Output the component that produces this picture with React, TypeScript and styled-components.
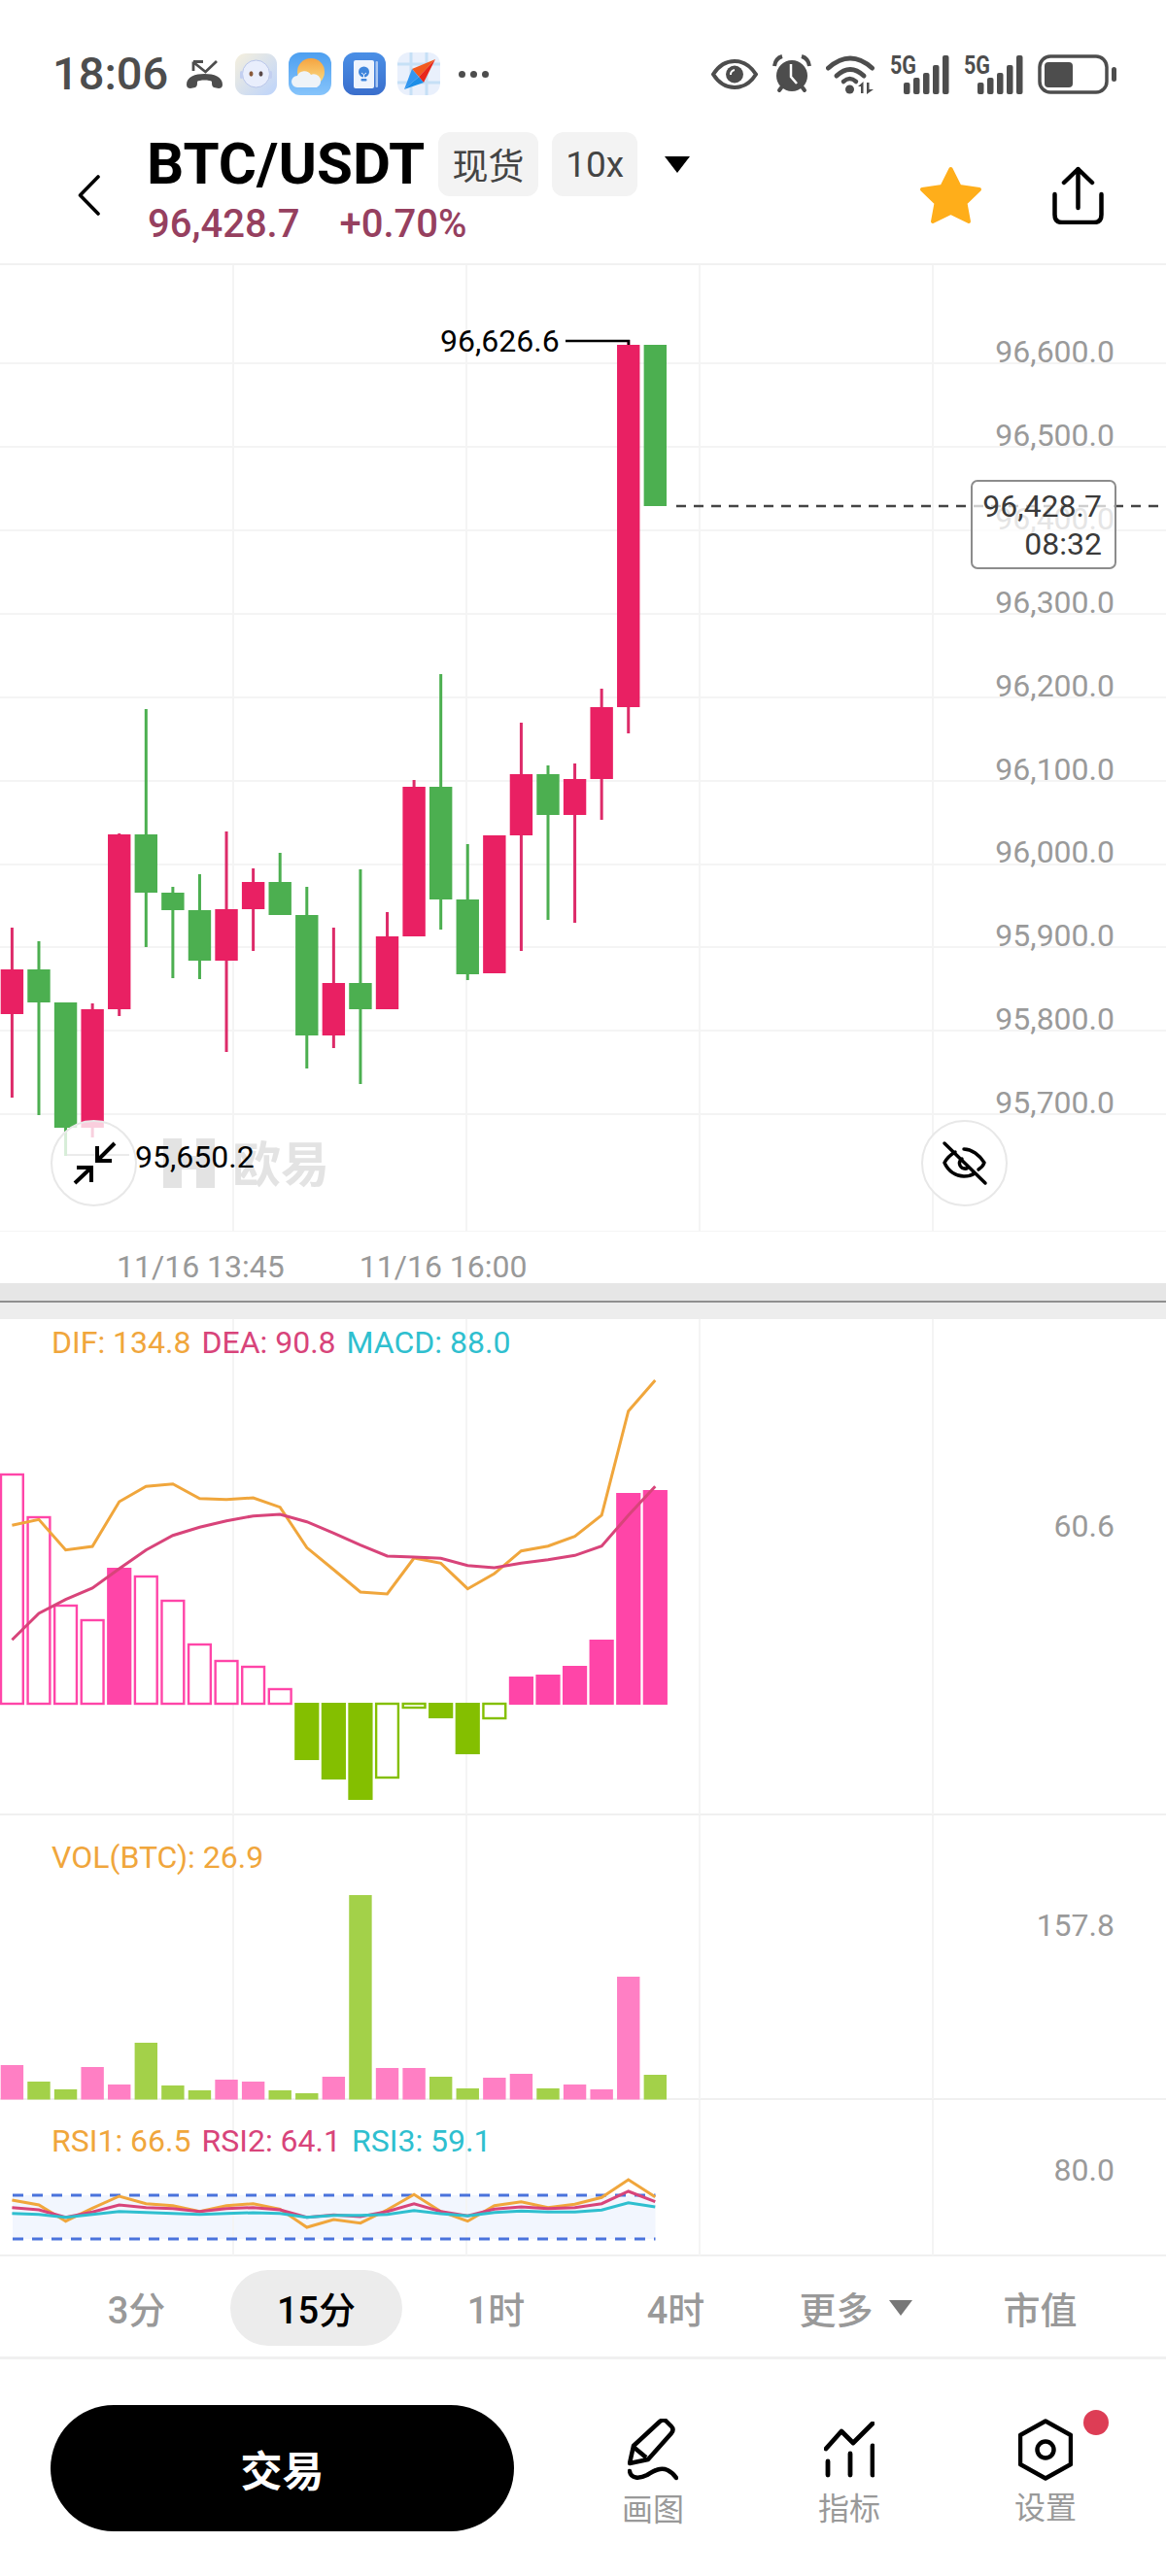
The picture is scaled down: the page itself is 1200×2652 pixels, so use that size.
import React from "react";
import styled, { createGlobalStyle } from "styled-components";

const FONT = `Roboto, "Noto Sans CJK SC", sans-serif`;

const GlobalStyle = createGlobalStyle`
  html, body { margin: 0; padding: 0; background: #fff; }
  body { font-family: ${FONT}; }
`;

const Page = styled.div`
  width: 1200px;
  height: 2652px;
  overflow: hidden;
  background: #fff;
  display: flex;
  flex-direction: column;
`;

/* ---------- status bar ---------- */
const StatusBar = styled.div`
  height: 130px;
  box-sizing: border-box;
  padding: 22px 51px 0 54px;
  display: flex;
  align-items: center;
  color: #4d4d4d;
`;
const Clock = styled.span`
  font-size: 47px;
  font-weight: 500;
  line-height: 50px;
  margin-right: 18px;
`;
const StatusLeft = styled.div`
  display: flex;
  align-items: center;
  gap: 12px;
`;
const StatusRight = styled.div`
  margin-left: auto;
  display: flex;
  align-items: center;
  gap: 15px;
`;
const Dots = styled.div`
  display: flex;
  gap: 5px;
  margin-left: 7px;
`;
const Dot = styled.span`
  width: 7px;
  height: 7px;
  border-radius: 50%;
  background: #4d4d4d;
`;

/* ---------- header ---------- */
const Header = styled.header`
  height: 143px;
  box-sizing: border-box;
  border-bottom: 2px solid #f1f1f1;
  padding: 0 64px 0 80px;
  display: flex;
  align-items: center;
`;
const TitleColumn = styled.div`
  margin-left: 48px;
  align-self: flex-start;
  padding-top: 6px;
`;
const TitleRow = styled.div`
  display: flex;
  align-items: center;
  height: 66px;
`;
const Title = styled.h1`
  margin: 0 14px 0 0;
  font-size: 60px;
  font-weight: 700;
  color: #000;
  line-height: 66px;
  white-space: nowrap;
`;
const Tag = styled.span<{ $w: number }>`
  width: ${(p) => p.$w}px;
  height: 66px;
  margin-right: 14px;
  border-radius: 12px;
  background: #f3f3f3;
  color: #444;
  font-size: 37px;
  display: flex;
  align-items: center;
  justify-content: center;
`;
const DropTriangle = styled.span<{ $w: number; $h: number; $c: string }>`
  display: block;
  width: 0;
  height: 0;
  border-left: ${(p) => p.$w / 2}px solid transparent;
  border-right: ${(p) => p.$w / 2}px solid transparent;
  border-top: ${(p) => p.$h}px solid ${(p) => p.$c};
`;
const HeaderDrop = styled.div`
  margin-left: 14px;
`;
const PriceRow = styled.div`
  display: flex;
  gap: 41px;
  margin-top: 7px;
  margin-left: 1px;
  font-size: 40px;
  line-height: 44px;
  font-weight: 500;
  color: #96405f;
`;
const HeaderActions = styled.div`
  margin-left: auto;
  display: flex;
  align-items: center;
  gap: 72px;
`;

/* ---------- charts ---------- */
const Panel = styled.section<{ $h: number; $line?: boolean }>`
  position: relative;
  height: ${(p) => p.$h}px;
  flex: none;
  box-shadow: ${(p) => (p.$line ? "inset 0 -2px 0 #f0f0f0" : "none")};
`;
const ChartSvg = styled.svg`
  display: block;
  width: 1200px;
  height: 100%;
`;
const ChartText = styled.text<{ $fill: string; $size: number; $weight?: number }>`
  font-family: ${FONT};
  font-size: ${(p) => p.$size}px;
  font-weight: ${(p) => p.$weight ?? 400};
  fill: ${(p) => p.$fill};
`;
const Legend = styled.div<{ $top: number }>`
  position: absolute;
  left: 53px;
  top: ${(p) => p.$top}px;
  display: flex;
  gap: 11px;
  font-size: 32px;
  line-height: 36px;
`;
const LegendItem = styled.span<{ $c: string }>`
  color: ${(p) => p.$c};
`;
const FloatButton = styled.button<{ $left: number }>`
  position: absolute;
  left: ${(p) => p.$left}px;
  top: 880px;
  width: 89px;
  height: 89px;
  box-sizing: border-box;
  padding: 0;
  border-radius: 50%;
  border: 2px solid #e8e8e8;
  background: rgba(255, 255, 255, 0.78);
  display: flex;
  align-items: center;
  justify-content: center;
`;
const PriceTag = styled.div`
  position: absolute;
  left: 999px;
  top: 221px;
  width: 150px;
  height: 92px;
  box-sizing: border-box;
  padding: 6px 13px 0 0;
  border: 2px solid #8c8c8c;
  border-radius: 7px;
  background: rgba(255, 255, 255, 0.74);
  text-align: right;
  color: #3a3a3a;
  font-size: 32px;
  line-height: 39px;
`;
const TimeAxis = styled.div`
  height: 53px;
  box-sizing: border-box;
  padding: 18px 0 0 120px;
  display: flex;
  gap: 77px;
  font-size: 32px;
  line-height: 37px;
  color: #999;
`;
const Divider = styled.div`
  height: 37px;
  flex: none;
  background: linear-gradient(#e6e6e6 18px, #8f8f8f 18px, #8f8f8f 20px, #ededed 20px);
`;

/* ---------- tabs ---------- */
const Tabs = styled.nav`
  height: 106px;
  flex: none;
  box-sizing: border-box;
  padding: 2px 0 0 48px;
  border-bottom: 3px solid #f0f0f0;
  display: grid;
  grid-template-columns: repeat(5, 185px) 195px;
  align-items: center;
`;
const Tab = styled.div<{ $active?: boolean }>`
  height: 78px;
  margin: 0 4px;
  border-radius: 39px;
  display: flex;
  align-items: center;
  justify-content: center;
  gap: 16px;
  font-size: 38px;
  font-weight: 500;
  color: ${(p) => (p.$active ? "#000" : "#999")};
  background: ${(p) => (p.$active ? "#ececec" : "transparent")};
`;

/* ---------- bottom nav ---------- */
const BottomNav = styled.footer`
  flex: 1;
  box-sizing: border-box;
  padding: 47px 0 0 52px;
  display: flex;
  align-items: flex-start;
`;
const TradeButton = styled.button`
  width: 477px;
  height: 130px;
  margin-right: 42px;
  border: none;
  border-radius: 65px;
  background: #000;
  color: #fff;
  font-family: ${FONT};
  font-size: 43px;
  font-weight: 700;
`;
const NavItem = styled.div`
  position: relative;
  width: 202px;
  padding-top: 12px;
  display: flex;
  flex-direction: column;
  align-items: center;
`;
const NavIconBox = styled.div`
  height: 68px;
  display: flex;
  align-items: center;
  justify-content: center;
`;
const NavLabel = styled.span<{ $drop?: number }>`
  font-size: 32px;
  line-height: 40px;
  color: #999;
  margin-top: ${(p) => p.$drop ?? 7}px;
`;
const RedDot = styled.span`
  position: absolute;
  left: 140px;
  top: 5px;
  width: 26px;
  height: 26px;
  border-radius: 50%;
  background: #dd3d55;
`;

/* ---------- data ---------- */
type Candle = [string, number, number, number, number];
const P = "#e92063";
const G = "#4caf50";
const candles: Candle[] = [
  [P, 955, 998, 1044, 1130],
  [G, 969, 998, 1032, 1148],
  [G, 1032, 1032, 1161, 1190],
  [P, 1033, 1039, 1161, 1171],
  [P, 858, 859, 1039, 1046],
  [G, 730, 859, 919, 975],
  [G, 913, 919, 937, 1007],
  [G, 900, 937, 989, 1008],
  [P, 856, 936, 989, 1083],
  [P, 894, 908, 936, 979],
  [G, 878, 908, 942, 942],
  [G, 913, 942, 1066, 1100],
  [P, 955, 1012, 1066, 1079],
  [G, 895, 1012, 1039, 1116],
  [P, 939, 964, 1039, 1039],
  [P, 803, 810, 964, 964],
  [G, 694, 810, 926, 957],
  [G, 869, 926, 1003, 1009],
  [P, 860, 860, 1002, 1002],
  [P, 744, 797, 860, 979],
  [G, 788, 797, 839, 947],
  [P, 786, 802, 839, 950],
  [P, 709, 728, 802, 844],
  [P, 350, 355, 728, 755],
  [G, 355, 355, 521, 521],
];
const cx = (i: number) => 12.4 + 27.58 * i;
const toPoints = (vals: number[], base: number) =>
  vals.map((z, i) => `${cx(i).toFixed(1)},${(base + z / 3).toFixed(1)}`).join(" ");

const hGrid = [374, 460, 546, 632, 718, 804, 890, 975, 1061, 1147, 1268];
const vGrid = [240, 480, 720, 960];
const axisLabels = ["96,600.0", "96,500.0", "96,400.0", "96,300.0", "96,200.0", "96,100.0", "96,000.0", "95,900.0", "95,800.0", "95,700.0"];

type Hist = [boolean, boolean, number];
const HP = "#ff45a8";
const HG = "#84bf00";
const macdBars: Hist[] = [
  [true, true, 1517], [true, true, 1561], [true, true, 1652], [true, true, 1667],
  [true, false, 1614], [true, true, 1622], [true, true, 1647], [true, true, 1692],
  [true, true, 1709], [true, true, 1715], [true, true, 1738],
  [false, false, 1812], [false, false, 1832], [false, false, 1853], [false, true, 1831],
  [false, true, 1759], [false, false, 1769], [false, false, 1806], [false, true, 1770],
  [true, false, 1726], [true, false, 1724], [true, false, 1715], [true, false, 1688],
  [true, false, 1537], [true, false, 1534],
];
const dif = [691, 673, 767, 756, 618, 571, 563, 608, 611, 606, 635, 760, 828, 897, 903, 792, 808, 887, 840, 770, 755, 725, 660, 338, 243];
const dea = [1045, 963, 920, 885, 825, 767, 722, 697, 677, 662, 657, 680, 715, 752, 786, 789, 793, 815, 822, 808, 797, 784, 755, 660, 571];

const volTops = [798, 849, 873, 804, 858, 729, 861, 876, 843, 849, 876, 885, 834, 273, 807, 807, 834, 870, 837, 825, 870, 858, 873, 525, 828];
const volPink = [1, 0, 0, 1, 1, 0, 0, 0, 1, 1, 0, 0, 1, 0, 1, 1, 0, 0, 1, 1, 0, 1, 1, 1, 0];

const rsi1 = [1215, 1230, 1280, 1240, 1203, 1226, 1232, 1250, 1232, 1226, 1243, 1299, 1275, 1286, 1245, 1198, 1250, 1280, 1232, 1220, 1238, 1228, 1207, 1152, 1205];
const rsi2 = [1238, 1245, 1268, 1252, 1230, 1238, 1241, 1250, 1241, 1238, 1245, 1268, 1261, 1266, 1250, 1226, 1250, 1264, 1243, 1236, 1241, 1238, 1226, 1188, 1220];
const rsi3 = [1256, 1259, 1268, 1259, 1250, 1253, 1256, 1259, 1256, 1254, 1256, 1268, 1262, 1262, 1259, 1247, 1257, 1264, 1253, 1249, 1252, 1252, 1246, 1223, 1236];

const ORANGE = "#f0a63c";
const ROSE = "#d8447a";
const CYAN = "#2fbfcf";
const GRID = "#f4f4f4";

const VLines = ({ y1, y2 }: { y1: number; y2: number }) => (
  <>
    {vGrid.map((x) => (
      <line key={x} x1={x} x2={x} y1={y1} y2={y2} stroke={GRID} strokeWidth={2} />
    ))}
  </>
);

/* ---------- icons ---------- */
const MissedCall = () => (
  <svg width="39" height="31" viewBox="0 0 39 31">
    <path d="M32 2 L20.500 13 L8 3 M8 2.500 H18 M8 2.500 V12" fill="none" stroke="#4d4d4d" strokeWidth="2.800" />
    <path d="M1 26 C1 18 10 15 19.500 15 C29 15 38 18 38 26 C38 29 36 30 34 30 L29 29 C27 28 27 26 27 23 C25 21 14 21 12 23 C12 26 12 28 10 29 L5 30 C3 30 1 29 1 26Z" fill="#4d4d4d" />
  </svg>
);
const RobotApp = () => (
  <svg width="43" height="43" viewBox="0 0 43 43">
    <defs>
      <linearGradient id="rb" x1="0" y1="0" x2="1" y2="1">
        <stop offset="0" stopColor="#f6f0dd" />
        <stop offset="1" stopColor="#bcd3fb" />
      </linearGradient>
    </defs>
    <rect width="43" height="43" rx="11" fill="url(#rb)" />
    <circle cx="21.500" cy="21" r="14" fill="#e9eefc" stroke="#b9c6ea" strokeWidth="1" />
    <rect x="5" y="18" width="3" height="8" rx="1.500" fill="#c3cff0" />
    <rect x="35" y="18" width="3" height="8" rx="1.500" fill="#c3cff0" />
    <ellipse cx="16.500" cy="21" rx="2" ry="2.700" fill="#8a5a3a" />
    <ellipse cx="26.500" cy="21" rx="2" ry="2.700" fill="#5a4a4a" />
  </svg>
);
const WeatherApp = () => (
  <svg width="44" height="44" viewBox="0 0 44 44">
    <defs>
      <linearGradient id="wb" x1="0" y1="0" x2="0" y2="1">
        <stop offset="0" stopColor="#4d9ff0" />
        <stop offset="1" stopColor="#86c4fb" />
      </linearGradient>
      <linearGradient id="ws" x1="0" y1="0" x2="0" y2="1">
        <stop offset="0" stopColor="#f5a340" />
        <stop offset="1" stopColor="#fbe28a" />
      </linearGradient>
    </defs>
    <rect width="44" height="44" rx="12" fill="url(#wb)" />
    <circle cx="23" cy="20" r="14" fill="url(#ws)" />
    <path d="M9 36 a6 6 0 0 1 0 -12 a8 8 0 0 1 14 -1 a7 7 0 0 1 6 13 Z" fill="#eef3f8" />
  </svg>
);
const NoteApp = () => (
  <svg width="44" height="44" viewBox="0 0 44 44">
    <defs>
      <linearGradient id="nb" x1="0" y1="0" x2="0" y2="1">
        <stop offset="0" stopColor="#4a8fe6" />
        <stop offset="1" stopColor="#3a6ecc" />
      </linearGradient>
    </defs>
    <rect width="44" height="44" rx="12" fill="url(#nb)" />
    <rect x="11" y="8" width="21" height="29" rx="2" fill="#eef4fd" />
    <rect x="33.500" y="9" width="2.500" height="27" rx="1" fill="#a9c7f2" />
    <circle cx="21.500" cy="20" r="5.500" fill="#3f86dc" />
    <path d="M19 21 l2.500 2 l2.500 -2 M21.500 23 v3" fill="none" stroke="#eef4fd" strokeWidth="1" />
    <rect x="18.500" y="27" width="6" height="2.500" rx="1" fill="#3f86dc" />
  </svg>
);
const CompassApp = () => (
  <svg width="44" height="44" viewBox="0 0 44 44">
    <rect width="44" height="44" rx="12" fill="#e9f0fc" />
    <path d="M14 0 V44 M30 0 V44 M0 12 H44 M0 31 H44" stroke="#c6e0f6" strokeWidth="3" />
    <path d="M39 7 L22 25 L15 17 Z" fill="#f25a1e" />
    <path d="M39 7 L27 31 L22 25 Z" fill="#e8271b" />
    <path d="M15 17 L22 25 L7 38 Z" fill="#3296f0" />
    <path d="M27 31 L22 25 L7 38 Z" fill="#1c8ee8" />
  </svg>
);
const EyeStatus = () => (
  <svg width="48" height="31" viewBox="0 0 48 31">
    <path d="M2 15.500 C8 6 15 2 24 2 C33 2 40 6 46 15.500 C40 25 33 29 24 29 C15 29 8 25 2 15.500Z" fill="none" stroke="#4d4d4d" strokeWidth="4" />
    <circle cx="24" cy="15.500" r="9" fill="#4d4d4d" />
    <path d="M20 16 a4.500 4.500 0 0 1 4 -5" fill="none" stroke="#fff" strokeWidth="2" />
  </svg>
);
const AlarmStatus = () => (
  <svg width="40" height="40" viewBox="0 0 40 40">
    <circle cx="20" cy="22" r="16" fill="#4d4d4d" />
    <path d="M2 12 Q3 4 10 2 M38 12 Q37 4 30 2" fill="none" stroke="#4d4d4d" strokeWidth="4" />
    <path d="M7 37 L10 33 M33 37 L30 33" stroke="#4d4d4d" strokeWidth="4" strokeLinecap="round" />
    <path d="M19 10 V23 L25 30" fill="none" stroke="#fff" strokeWidth="2.500" />
  </svg>
);
const WifiStatus = () => (
  <svg width="51" height="41" viewBox="0 0 51 41">
    <path d="M2.500 14 Q25 -6 47.500 14" fill="none" stroke="#4d4d4d" strokeWidth="5" strokeLinecap="round" />
    <path d="M11 22 Q25 9 39 22" fill="none" stroke="#4d4d4d" strokeWidth="5" strokeLinecap="round" />
    <path d="M18 28 Q24.500 22 31 28" fill="none" stroke="#4d4d4d" strokeWidth="4.500" strokeLinecap="round" />
    <circle cx="24.500" cy="36" r="4.500" fill="#4d4d4d" />
    <path d="M38.500 28 V40 H36 V33 H33 Z M42 41 V29 H44.500 V36 H49 Z" fill="#4d4d4d" />
  </svg>
);
const SignalStatus = () => (
  <svg width="61" height="51" viewBox="0 -5 61 51">
    <ChartText x="0" y="20" $fill="#4d4d4d" $size={26} $weight={700} textLength={27} lengthAdjust="spacingAndGlyphs">5G</ChartText>
    {[29, 24, 19, 11, 1].map((t, i) => (
      <rect key={i} x={14 + i * 10} y={t} width="6.500" height={41 - t} rx="2" fill="#4d4d4d" />
    ))}
  </svg>
);
const BatteryStatus = () => (
  <svg width="81" height="41" viewBox="0 0 81 41">
    <rect x="2" y="2" width="69" height="37" rx="11" fill="none" stroke="#4d4d4d" strokeWidth="3.500" />
    <rect x="7" y="8" width="29" height="26" rx="4" fill="#4d4d4d" />
    <rect x="76" y="13" width="5" height="15" rx="2.500" fill="#4d4d4d" />
  </svg>
);
const BackIcon = () => (
  <svg width="23" height="42" viewBox="0 0 23 42">
    <path d="M21 2 L2.500 21 L21 40" fill="none" stroke="#000" strokeWidth="3.600" strokeLinecap="round" strokeLinejoin="round" />
  </svg>
);
const StarIcon = () => (
  <svg width="65" height="60" viewBox="0 0 65 60">
    <polygon points="32.500,3 41.500,21 62,24 47.500,38 51,57 32.500,48 14,57 17.500,38 3,24 23.500,21" fill="#ffae1a" stroke="#ffae1a" strokeWidth="4" strokeLinejoin="round" />
  </svg>
);
const ShareIcon = () => (
  <svg width="53" height="60" viewBox="0 0 53 60">
    <path d="M26.500 3 V43 M12 17 L26.500 3 L41 17 M2.500 29 V50 Q2.500 58 10 58 H43 Q50.500 58 50.500 50 V29" fill="none" stroke="#000" strokeWidth="4.500" strokeLinecap="round" strokeLinejoin="round" />
  </svg>
);
const CollapseIcon = () => (
  <svg width="50" height="50" viewBox="0 0 50 50">
    <path d="M46 4 L28 22 M28 7 V22 H43 M5 45 L22 29 M7 29 H22 V44" fill="none" stroke="#000" strokeWidth="4" />
  </svg>
);
const EyeOffIcon = () => (
  <svg width="50" height="50" viewBox="0 0 50 50">
    <path d="M4 4 L46 45 M24 10 C32 10 40 16 45 24 C44 27 42 29 39 31 M15 13 C10 16 6 20 4 24 C8 33 16 38 24 38 C28 38 32 37 35 35 M22 20 C17 24 20 31 27 30" fill="none" stroke="#000" strokeWidth="3.500" strokeLinecap="round" strokeLinejoin="round" />
  </svg>
);
const PenIcon = () => (
  <svg width="52" height="64" viewBox="0 0 52 64">
    <path d="M2 46 L6 28 L33 3 Q37 0 40 3 L45 8 Q48 11 45 15 L21 42 Z M7 30 L19 40" fill="none" stroke="#000" strokeWidth="4.500" strokeLinejoin="round" />
    <path d="M2 54 C3 62 12 62 20 58 C28 53 34 50 41 53 C45 55 48 58 50 61" fill="none" stroke="#000" strokeWidth="4.500" strokeLinecap="round" />
  </svg>
);
const IndicatorIcon = () => (
  <svg width="52" height="58" viewBox="0 0 52 58">
    <path d="M2 28 L18 10 L30 22 L50 2 M4 41 V55 M27 33 V55 M50 25 V55" fill="none" stroke="#000" strokeWidth="4.800" strokeLinecap="round" strokeLinejoin="round" />
  </svg>
);
const SettingsIcon = () => (
  <svg width="56" height="64" viewBox="0 0 56 64">
    <path d="M28 2.500 L54 17 V47 L28 61.500 L2 47 V17 Z" fill="none" stroke="#000" strokeWidth="4.500" strokeLinejoin="round" />
    <circle cx="28" cy="32" r="8.500" fill="none" stroke="#000" strokeWidth="4.500" />
  </svg>
);

export default function App() {
  return (
    <Page>
      <GlobalStyle />
      <StatusBar>
        <Clock>18:06</Clock>
        <StatusLeft>
          <MissedCall />
          <RobotApp />
          <WeatherApp />
          <NoteApp />
          <CompassApp />
          <Dots>
            <Dot />
            <Dot />
            <Dot />
          </Dots>
        </StatusLeft>
        <StatusRight>
          <EyeStatus />
          <AlarmStatus />
          <WifiStatus />
          <SignalStatus />
          <SignalStatus />
          <BatteryStatus />
        </StatusRight>
      </StatusBar>

      <Header>
        <BackIcon />
        <TitleColumn>
          <TitleRow>
            <Title>BTC/USDT</Title>
            <Tag $w={103}>现货</Tag>
            <Tag $w={88}>10x</Tag>
            <HeaderDrop>
              <DropTriangle $w={26} $h={17} $c="#000" />
            </HeaderDrop>
          </TitleRow>
          <PriceRow>
            <span>96,428.7</span>
            <span>+0.70%</span>
          </PriceRow>
        </TitleColumn>
        <HeaderActions>
          <StarIcon />
          <ShareIcon />
        </HeaderActions>
      </Header>

      <Panel $h={995}>
        <ChartSvg viewBox="0 273 1200 995">
          <VLines y1={273} y2={1268} />
          {hGrid.map((y) => (
            <line key={y} x1={0} x2={1200} y1={y} y2={y} stroke={GRID} strokeWidth={2} />
          ))}
          {axisLabels.map((t, i) => (
            <ChartText key={t} x={1147} y={373 + i * 85.9} textAnchor="end" $fill="#9a9a9a" $size={32}>
              {t}
            </ChartText>
          ))}
          <g fill="#e3e3e3">
            <rect x="168" y="1172" width="19" height="51" />
            <rect x="202" y="1172" width="19" height="51" />
            <rect x="187" y="1190" width="15" height="14" />
          </g>
          <ChartText x={239} y={1217} $fill="#e3e3e3" $size={50} $weight={700}>
            欧易
          </ChartText>
          <path d="M68 1161 V1189 H133" fill="none" stroke="#a5a5a5" strokeWidth={2} />
          {candles.map(([c, wt, bt, bb, wb], i) => (
            <g key={i}>
              <rect x={cx(i) - 1.5} y={wt} width={3} height={wb - wt} fill={c === P ? "#dd2b69" : c} />
              <rect x={cx(i) - 11.7} y={bt} width={23.4} height={bb - bt} fill={c} />
            </g>
          ))}
          <path d="M582 351 H647 V355" fill="none" stroke="#000" strokeWidth={2.500} />
          <ChartText x={453} y={362} $fill="#000" $size={32}>96,626.6</ChartText>
          <ChartText x={139} y={1202} $fill="#000" $size={32}>95,650.2</ChartText>
          <line x1={696} x2={1206} y1={521} y2={521} stroke="#444" strokeWidth={2.500} strokeDasharray="10 8" />
        </ChartSvg>
        <PriceTag>
          96,428.7
          <br />
          08:32
        </PriceTag>
        <FloatButton $left={52}>
          <CollapseIcon />
        </FloatButton>
        <FloatButton $left={948}>
          <EyeOffIcon />
        </FloatButton>
      </Panel>

      <TimeAxis>
        <span>11/16 13:45</span>
        <span>11/16 16:00</span>
      </TimeAxis>
      <Divider />

      <Panel $h={511} $line>
        <ChartSvg viewBox="0 1358 1200 511">
          <VLines y1={1358} y2={1868} />
          {macdBars.map(([up, hollow, end], i) => {
            const top = up ? end : 1753;
            const bottom = up ? 1755 : end;
            const color = up ? HP : HG;
            return hollow ? (
              <rect key={i} x={cx(i) - 11.4} y={top + 1} width={22.8} height={bottom - top - 2} fill="#fff" stroke={color} strokeWidth={2.400} />
            ) : (
              <rect key={i} x={cx(i) - 12.6} y={top} width={25.2} height={bottom - top} fill={color} />
            );
          })}
          <polyline points={toPoints(dif, 1340)} fill="none" stroke={ORANGE} strokeWidth={3} />
          <polyline points={toPoints(dea, 1340)} fill="none" stroke={ROSE} strokeWidth={3} />
          <ChartText x={1147} y={1582} textAnchor="end" $fill="#9a9a9a" $size={32}>60.6</ChartText>
        </ChartSvg>
        <Legend $top={6}>
          <LegendItem $c={ORANGE}>DIF: 134.8</LegendItem>
          <LegendItem $c={ROSE}>DEA: 90.8</LegendItem>
          <LegendItem $c={CYAN}>MACD: 88.0</LegendItem>
        </Legend>
      </Panel>

      <Panel $h={293} $line>
        <ChartSvg viewBox="0 1869 1200 293">
          <VLines y1={1869} y2={2161} />
          {volTops.map((z, i) => (
            <rect key={i} x={cx(i) - 11.7} y={1860 + z / 3} width={23.4} height={2161.500 - (1860 + z / 3)} fill={volPink[i] ? "#ff7fc4" : "#a3d149"} />
          ))}
          <ChartText x={1147} y={1993} textAnchor="end" $fill="#9a9a9a" $size={32}>157.8</ChartText>
        </ChartSvg>
        <Legend $top={25}>
          <LegendItem $c={ORANGE}>VOL(BTC): 26.9</LegendItem>
        </Legend>
      </Panel>

      <Panel $h={161} $line>
        <ChartSvg viewBox="0 2162 1200 161">
          <rect x={13} y={2260} width={661.500} height={45} fill="#f2f6fe" />
          <VLines y1={2162} y2={2322} />
          <line x1={13} x2={674.500} y1={2260} y2={2260} stroke="#4a73dc" strokeWidth={3} strokeDasharray="11 9" />
          <line x1={13} x2={674.500} y1={2305} y2={2305} stroke="#4a73dc" strokeWidth={3} strokeDasharray="11 9" />
          <polyline points={toPoints(rsi1, 1860)} fill="none" stroke={ORANGE} strokeWidth={3} />
          <polyline points={toPoints(rsi2, 1860)} fill="none" stroke={ROSE} strokeWidth={3} />
          <polyline points={toPoints(rsi3, 1860)} fill="none" stroke={CYAN} strokeWidth={3} />
          <ChartText x={1147} y={2245} textAnchor="end" $fill="#9a9a9a" $size={32}>80.0</ChartText>
        </ChartSvg>
        <Legend $top={24}>
          <LegendItem $c={ORANGE}>RSI1: 66.5</LegendItem>
          <LegendItem $c={ROSE}>RSI2: 64.1</LegendItem>
          <LegendItem $c={CYAN}>RSI3: 59.1</LegendItem>
        </Legend>
      </Panel>

      <Tabs>
        <Tab>3分</Tab>
        <Tab $active>15分</Tab>
        <Tab>1时</Tab>
        <Tab>4时</Tab>
        <Tab>
          更多
          <DropTriangle $w={24} $h={16} $c="#777" />
        </Tab>
        <Tab>市值</Tab>
      </Tabs>

      <BottomNav>
        <TradeButton>交易</TradeButton>
        <NavItem>
          <NavIconBox>
            <PenIcon />
          </NavIconBox>
          <NavLabel $drop={8}>画图</NavLabel>
        </NavItem>
        <NavItem>
          <NavIconBox>
            <IndicatorIcon />
          </NavIconBox>
          <NavLabel>指标</NavLabel>
        </NavItem>
        <NavItem>
          <NavIconBox>
            <SettingsIcon />
          </NavIconBox>
          <NavLabel $drop={6}>设置</NavLabel>
          <RedDot />
        </NavItem>
      </BottomNav>
    </Page>
  );
}
